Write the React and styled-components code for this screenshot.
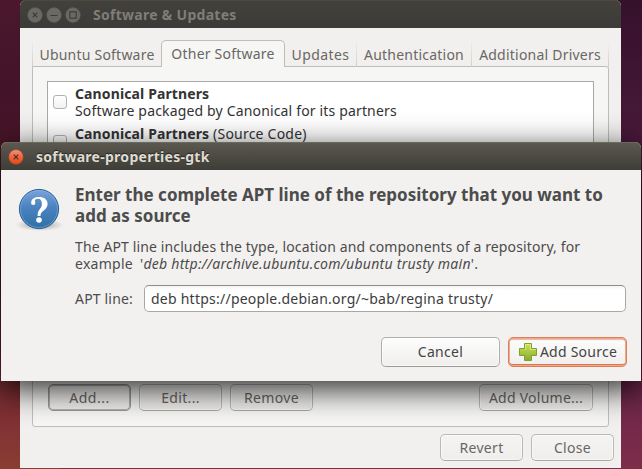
import React from 'react';
import styled, { createGlobalStyle, css } from 'styled-components';

const GlobalStyle = createGlobalStyle`
  * { box-sizing: border-box; }
  body {
    margin: 0;
    overflow: hidden;
    font: 14px/17px "Noto Sans", "Open Sans", sans-serif;
    letter-spacing: 0.27px;
  }
`;

const Desktop = styled.div`
  position: relative;
  width: 642px;
  height: 469px;
  padding: 0 21px 1px 20px;
  overflow: hidden;
  background:
    linear-gradient(#35112c 0, #48193a 140px, #4a1a38 300px, #74294a 420px, #7c2d49 469px) right / 40px 100% no-repeat,
    linear-gradient(#4b182c 0, #43132a 90px, #491527 150px, #571c28 300px, #7c2f33 410px, #8a3d33 469px) left / 60px 100% no-repeat,
    #7b3040;
`;

const Window = styled.main`
  display: flex;
  flex-direction: column;
  height: 468px;
  border-radius: 6px 6px 0 0;
  background: #f1f0ee;
  overflow: hidden;
`;

const TitleBar = styled.header`
  flex: none;
  display: flex;
  align-items: center;
  height: 28px;
  font-weight: 700;
  letter-spacing: 0.28px;
  white-space: nowrap;
  ${({ $active }) =>
    $active
      ? css`
          padding: 1px 7px 0;
          color: #dfdbd2;
          text-shadow: 0 -1px 1px #24231f;
          background: linear-gradient(#5b5950, #3e3d37);
          box-shadow: inset 0 1px #6b685c;
          border-radius: 6px 6px 0 0;
        `
      : css`
          padding: 1px 7px 0;
          color: #807d78;
          background: linear-gradient(#42413c, #3c3b37);
          box-shadow: inset 0 1px #4a4943;
        `}
`;

const TitleText = styled.h1`
  margin: 0 0 0 12px;
  font: inherit;
`;

const Controls = styled.div`
  display: flex;
  gap: 3px;
`;

const ControlIcon = styled.svg`
  display: block;
  width: 16px;
  height: 16px;
`;

const Content = styled.div`
  flex: 1;
  padding: 12px 12px 0 12px;
  color: #696763;
`;

const TabList = styled.nav`
  display: flex;
  align-items: flex-end;
  height: 27px;
  width: 578px;
  margin-bottom: -1px;
  position: relative;
  white-space: nowrap;
`;

const Tab = styled.div`
  flex: none;
  width: ${({ $width }) => $width}px;
  text-align: center;
  letter-spacing: ${({ $spacing }) => $spacing || 0.22}px;
  ${({ $active }) =>
    $active
      ? css`
          height: 27px;
          padding-top: 4px;
          border: 1px solid #c0bdb8;
          border-bottom: 0;
          border-radius: 5px 5px 0 0;
          background: #f6f6f5;
        `
      : css`
          height: 26px;
          padding-top: 5px;
          border-left: ${({ $plain }) => ($plain ? 0 : 1)}px solid;
          border-image: linear-gradient(#f1f0ee, #d0cdc8) 1;
        `}
`;

const TabDivider = styled.i`
  width: 1px;
  height: 24px;
  background: linear-gradient(#f1f0ee, #d0cdc8);
`;

const Page = styled.section`
  display: flex;
  flex-direction: column;
  justify-content: space-between;
  width: 577px;
  height: 361px;
  padding: 14px 14px 15px;
  border: 1px solid #c0bdb8;
  border-radius: 0 3px 3px 3px;
  background: #f6f6f5;
`;

const SourceList = styled.ul`
  width: 547px;
  height: 280px;
  margin: 0;
  padding: 1px 5px;
  list-style: none;
  color: #333;
  border: 1px solid #aaa9a7;
  background: #fff;
`;

const SourceRow = styled.li`
  display: flex;
  align-items: center;
  height: 40px;
  gap: 8px;
  padding-bottom: 3px;
`;

const SourceText = styled.div`
  height: 34px;
  letter-spacing: 0.16px;
  white-space: nowrap;
`;

const Strong = styled.b`
  letter-spacing: 0.12px;
`;

const SourceKind = styled.span`
  letter-spacing: 0.22px;
`;

const Checkbox = styled.span`
  flex: none;
  width: 14px;
  height: 14px;
  border: 1px solid #b4b2b0;
  border-radius: 3px;
  background: linear-gradient(#fff, #f2f1f0);
`;

const ButtonRow = styled.div`
  display: flex;
  gap: 8px;
  justify-content: ${({ $end }) => ($end ? 'flex-end' : 'flex-start')};
`;

const PageButtons = styled(ButtonRow)`
  padding: 0 1px;
`;

const Spacer = styled.span`
  flex: 1;
`;

const Button = styled.button`
  display: flex;
  align-items: center;
  justify-content: center;
  width: ${({ $width }) => $width || 83}px;
  height: ${({ $tall }) => ($tall ? 30 : 27)}px;
  padding: 0 0 1px;
  border: 1px solid ${({ $tall }) => ($tall ? '#b2afab' : '#bbb9b6')};
  border-bottom-color: ${({ $tall }) => ($tall ? '#9d9a96' : '#aaa8a5')};
  border-radius: 5px;
  font: inherit;
  letter-spacing: ${({ $spacing }) => $spacing || 0.33}px;
  color: ${({ $tall }) => ($tall ? '#444' : '#696763')};
  white-space: nowrap;
  background: ${({ $tall }) =>
    $tall ? 'linear-gradient(#fdfdfd, #f0efed)' : 'linear-gradient(#f5f4f3, #efeeec)'};
  box-shadow: inset 0 0 0 1px #ffffff88;
  ${({ $focused }) =>
    $focused &&
    css`
      border-color: #999896;
      box-shadow: inset 0 0 0 1px #b3b2b0;
    `}
  ${({ $suggested }) =>
    $suggested &&
    css`
      width: 119px;
      border-color: #d9805b;
      box-shadow: inset 0 0 0 1px #efa98c, inset 0 -2px #dc7549, inset 0 2px 1px #e9b7a2;
    `}
`;

const Footer = styled.footer`
  padding: 7px 0 0;
  margin-right: -5px;
`;

const Dialog = styled.section`
  position: absolute;
  left: 1px;
  top: 142px;
  width: 640px;
  height: 239px;
  border-radius: 6px 6px 0 0;
  background: #f2f1ef;
  color: #4c4c4c;
  box-shadow: 0 8px 32px rgba(0, 0, 0, 0.85);
`;

const DialogBody = styled.div`
  display: flex;
  padding: 14px 14px 0 15px;
  gap: 10px;
`;

const QuestionIcon = styled.svg`
  flex: none;
  display: block;
  width: 49px;
  height: 46px;
  margin-top: 3px;
`;

const Message = styled.div`
  flex: 1;
  white-space: nowrap;
`;

const Heading = styled.h2`
  margin: 0 0 12px;
  font-size: 17px;
  line-height: 21px;
  letter-spacing: 0;
`;

const LooseLine = styled.span`
  letter-spacing: 0;
`;

const Line = styled.div`
  letter-spacing: ${({ $spacing }) => $spacing || 0.12}px;
`;

const Sample = styled.span`
  margin-left: 7px;
  letter-spacing: 0.27px;
`;

const Field = styled.label`
  display: flex;
  align-items: center;
  gap: 11px;
  margin-top: 13px;
`;

const FieldName = styled.span`
  width: 58px;
  letter-spacing: 0.18px;
`;

const Entry = styled.input`
  width: 482px;
  height: 27px;
  padding: 0 6px 1px;
  border: 1px solid #a9a7a4;
  border-top-color: #8f8d8a;
  border-radius: 5px;
  outline: 0;
  font: inherit;
  letter-spacing: 0.24px;
  color: #3c3c3c;
  background: linear-gradient(#f4f4f4, #fff 4px);
`;

const Actions = styled(ButtonRow)`
  padding: 25px 14px 0 0;
`;

const PlusIcon = styled.svg`
  width: 20px;
  height: 20px;
  margin-right: 2px;
`;

const glyphs = {
  close: <path d="M5.700 5.700l4.600 4.600M10.300 5.700l-4.600 4.600" />,
  minimize: <path d="M4.500 8.500h7" />,
  maximize: <rect x="4.800" y="4.800" width="6.400" height="6.400" />,
};

function Control({ kind, active }) {
  return (
    <ControlIcon viewBox="0 0 16 16" fill="none">
      <circle cx="8" cy="8" r="7.4" fill={active ? 'url(#orange)' : '#6b6963'} stroke={active ? '#8e3820' : '#5d5b56'} strokeWidth=".5" />
      <defs>
        <linearGradient id="orange" x2="0" y2="1">
          <stop stopColor="#f5937a" />
          <stop offset=".5" stopColor="#ee6440" />
          <stop offset="1" stopColor="#df4b1c" />
        </linearGradient>
      </defs>
      <g stroke={active ? '#4a2a20' : '#3a3935'} strokeWidth="1.1">{glyphs[kind]}</g>
    </ControlIcon>
  );
}

function Question() {
  return (
    <QuestionIcon viewBox="0 0 49 46">
      <defs>
        <linearGradient id="ball" x2="0" y2="1">
          <stop stopColor="#7da3da" />
          <stop offset=".45" stopColor="#4b83c0" />
          <stop offset="1" stopColor="#2d71a6" />
        </linearGradient>
        <radialGradient id="ground">
          <stop stopColor="#000" stopOpacity=".35" />
          <stop offset="1" stopColor="#000" stopOpacity="0" />
        </radialGradient>
      </defs>
      <ellipse cx="23.500" cy="38" rx="24" ry="6" fill="url(#ground)" />
      <circle cx="23" cy="22" r="19.600" fill="url(#ball)" stroke="#285f96" strokeWidth="1" />
      <circle cx="23" cy="22" r="18.500" fill="none" stroke="#8db5e0" strokeOpacity=".5" />
      <path
        d="M15.2 16.8C14.8 12 18 9.9 22.9 9.9c5.3 0 8.7 2.6 8.7 7.1 0 3.1-2 5-4.4 6.9-2 1.6-2.7 2.6-2.7 5.1h-2.900c-.1-3.500.9-5.200 2.300-7 1.300-1.700 2-2.800 2-5 0-3.200-1.200-5.200-3.700-5.200-2.200 0-3.300.9-3.300 2.200 0 .8.4 1.300.4 2 0 1.200-.8 1.900-1.900 1.900-1.300 0-2.200-.7-2.300-1.300z"
        fill="#fff"
      />
      <circle cx="23" cy="33" r="2.800" fill="#fff" />
    </QuestionIcon>
  );
}

function Plus() {
  return (
    <PlusIcon viewBox="0 0 20 20">
      <defs>
        <linearGradient id="leaf" x2="0" y2="1">
          <stop stopColor="#cfe257" />
          <stop offset="1" stopColor="#85ac2c" />
        </linearGradient>
      </defs>
      <path d="M6.500 1.500h7v5h5v7h-5v5h-7v-5h-5v-7h5z" fill="url(#leaf)" stroke="#7ea030" strokeLinejoin="round" />
      <path d="M7.500 7.500v-5h5v5h5" fill="none" stroke="#e2ef93" strokeOpacity=".7" />
    </PlusIcon>
  );
}

export default function App() {
  return (
    <>
      <GlobalStyle />
      <Desktop>
        <Window>
          <TitleBar>
            <Controls>
              <Control kind="close" />
              <Control kind="minimize" />
              <Control kind="maximize" />
            </Controls>
            <TitleText>Software &amp; Updates</TitleText>
          </TitleBar>
          <Content>
            <TabList>
              <Tab $width={129}>Ubuntu Software</Tab>
              <Tab $active $width={124}>Other Software</Tab>
              <Tab $plain $width={71} $spacing={0.4}>Updates</Tab>
              <Tab $width={115}>Authentication</Tab>
              <Tab $width={137}>Additional Drivers</Tab>
              <TabDivider />
            </TabList>
            <Page>
              <SourceList>
                <SourceRow>
                  <Checkbox />
                  <SourceText>
                    <Strong>Canonical Partners</Strong>
                    <br />
                    Software packaged by Canonical for its partners
                  </SourceText>
                </SourceRow>
                <SourceRow>
                  <Checkbox />
                  <SourceText>
                    <Strong>Canonical Partners</Strong> <SourceKind>(Source Code)</SourceKind>
                  </SourceText>
                </SourceRow>
              </SourceList>
              <PageButtons>
                <Button $focused $spacing={0.5}>Add...</Button>
                <Button>Edit...</Button>
                <Button>Remove</Button>
                <Spacer />
                <Button $width={114} $spacing={0.25}>Add Volume...</Button>
              </PageButtons>
            </Page>
            <Footer>
              <ButtonRow $end>
                <Button>Revert</Button>
                <Button>Close</Button>
              </ButtonRow>
            </Footer>
          </Content>
        </Window>

        <Dialog>
          <TitleBar $active>
            <Control kind="close" active />
            <TitleText>software-properties-gtk</TitleText>
          </TitleBar>
          <DialogBody>
            <Question />
            <Message>
              <Heading>
                Enter the complete APT line of the repository that you want to
                <br />
                <LooseLine>add as source</LooseLine>
              </Heading>
              <Line>The APT line includes the type, location and components of a repository, for</Line>
              <Line $spacing={0.27}>
                example<Sample>&apos;<i>deb http://archive.ubuntu.com/ubuntu trusty main</i>&apos;.</Sample>
              </Line>
              <Field>
                <FieldName>APT line:</FieldName>
                <Entry defaultValue="deb https://people.debian.org/~bab/regina trusty/" />
              </Field>
            </Message>
          </DialogBody>
          <Actions $end>
            <Button $tall $width={119}>Cancel</Button>
            <Button $tall $suggested $spacing={0.25}>
              <Plus />
              Add Source
            </Button>
          </Actions>
        </Dialog>
      </Desktop>
    </>
  );
}
